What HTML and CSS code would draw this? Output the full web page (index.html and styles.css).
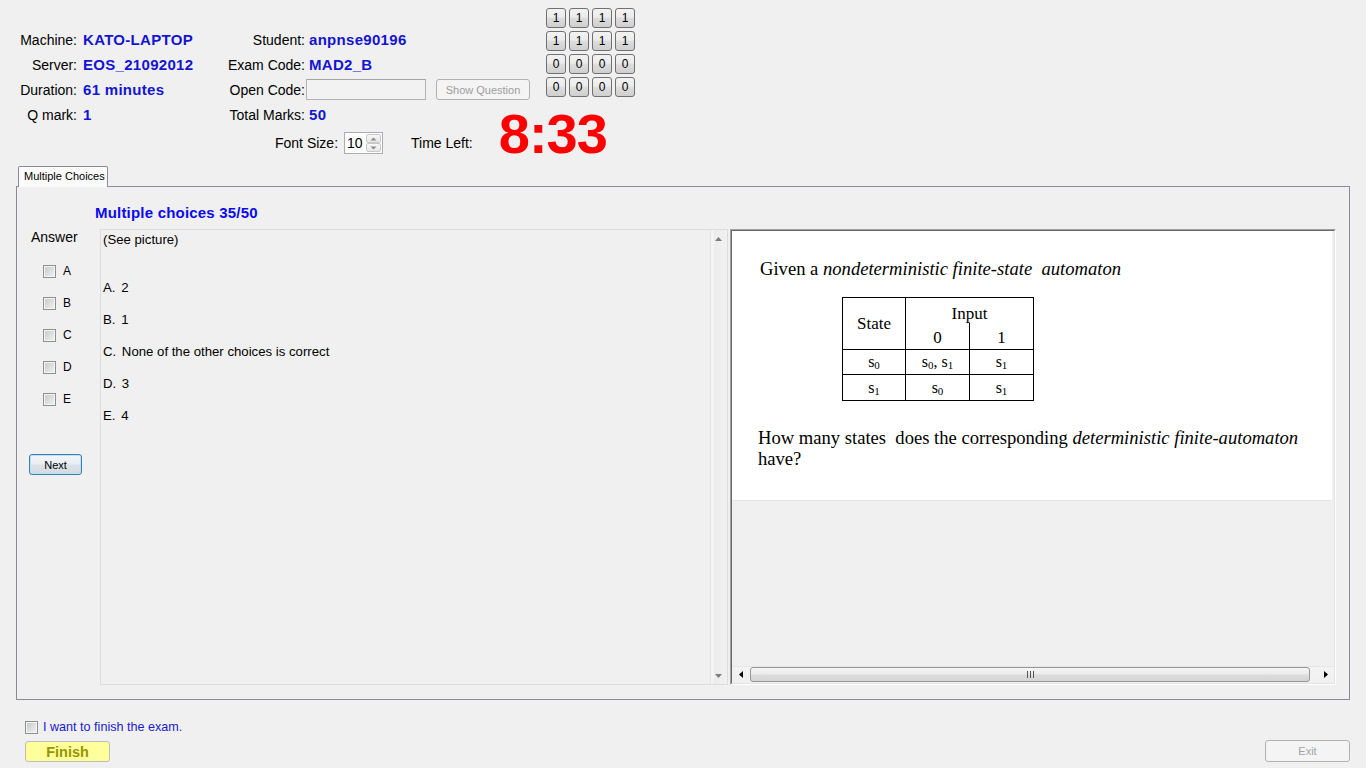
FILE: index.html
```html
<!DOCTYPE html>
<html>
<head>
<meta charset="utf-8">
<title>EOS Exam</title>
<link rel="stylesheet" href="styles.css">
</head>
<body>
<div class="app">
  <header class="top">
    <div class="top-left">
      <div class="info">
        <span class="lbl">Machine:</span><span class="val">KATO-LAPTOP</span><span class="lbl">Student:</span><span class="val val2">anpnse90196</span>
        <span class="lbl">Server:</span><span class="val">EOS_21092012</span><span class="lbl">Exam Code:</span><span class="val val2">MAD2_B</span>
        <span class="lbl">Duration:</span><span class="val">61 minutes</span><span class="lbl">Open Code:</span><span class="open-row"><span class="textbox"></span><span class="btn-disabled show-q">Show Question</span></span>
        <span class="lbl">Q mark:</span><span class="val">1</span><span class="lbl">Total Marks:</span><span class="val val2">50</span>
      </div>
      <div class="font-row">
        <span class="lbl2">Font Size:</span>
        <span class="spinner">
          <span class="spin-val">10</span>
          <span class="spin-btns">
            <span class="spin-btn"><svg width="7" height="4" viewBox="0 0 7 4"><path d="M0.5 3.5 L3.5 0.5 L6.5 3.5 Z" fill="#8a8a8a"/></svg></span>
            <span class="spin-btn"><svg width="7" height="4" viewBox="0 0 7 4"><path d="M0.5 0.5 L3.5 3.5 L6.5 0.5 Z" fill="#8a8a8a"/></svg></span>
          </span>
        </span>
        <span class="lbl2 time-lbl">Time Left:</span>
        <span class="timer">8:33</span>
      </div>
    </div>
    <div class="bits">
      <span class="bit">1</span><span class="bit">1</span><span class="bit">1</span><span class="bit">1</span>
      <span class="bit">1</span><span class="bit">1</span><span class="bit">1</span><span class="bit">1</span>
      <span class="bit">0</span><span class="bit">0</span><span class="bit">0</span><span class="bit">0</span>
      <span class="bit">0</span><span class="bit">0</span><span class="bit">0</span><span class="bit">0</span>
    </div>
  </header>

  <section class="tabs">
    <div class="tab-strip">
      <div class="tab">Multiple Choices</div>
    </div>
    <div class="panel">
      <div class="q-title">Multiple choices 35/50</div>
      <div class="qbody">
        <div class="answers">
          <div class="ans-title">Answer</div>
          <div class="ans-list">
            <div class="ans-row"><span class="cb"></span><span>A</span></div>
            <div class="ans-row"><span class="cb"></span><span>B</span></div>
            <div class="ans-row"><span class="cb"></span><span>C</span></div>
            <div class="ans-row"><span class="cb"></span><span>D</span></div>
            <div class="ans-row"><span class="cb"></span><span>E</span></div>
          </div>
          <div class="next">Next</div>
        </div>

        <div class="qtext">
          <div class="qtext-content">
            <div class="line first">(See picture)</div>
            <div class="line"><span class="key">A.</span> 2</div>
            <div class="line"><span class="key">B.</span> 1</div>
            <div class="line"><span class="key">C.</span> None of the other choices is correct</div>
            <div class="line"><span class="key">D.</span> 3</div>
            <div class="line"><span class="key">E.</span> 4</div>
          </div>
          <div class="vscroll">
            <span class="varrow"><svg width="7" height="4" viewBox="0 0 7 4"><path d="M0 4 L3.5 0 L7 4 Z" fill="#7d7d7d"/></svg></span>
            <span class="varrow"><svg width="7" height="4" viewBox="0 0 7 4"><path d="M0 0 L3.5 4 L7 0 Z" fill="#7d7d7d"/></svg></span>
          </div>
        </div>

        <div class="pic">
          <div class="pic-inner">
            <div class="pic-view">
              <div class="pic-img">
                <p class="p1">Given a <i>nondeterministic finite-state&nbsp; automaton</i></p>
                <table class="nfa">
                  <colgroup><col class="c1"><col class="c2"><col class="c3"></colgroup>
                  <tr class="r1"><td rowspan="2" class="hd">State</td><td colspan="2" class="hd input">Input</td></tr>
                  <tr class="r2"><td class="hd sub0">0</td><td class="hd sub1">1</td></tr>
                  <tr class="r3"><td>s<sub>0</sub></td><td>s<sub>0</sub>, s<sub>1</sub></td><td>s<sub>1</sub></td></tr>
                  <tr class="r4"><td>s<sub>1</sub></td><td>s<sub>0</sub></td><td>s<sub>1</sub></td></tr>
                </table>
                <p class="p2">How many states&nbsp; does the corresponding <i>deterministic finite-automaton</i><br>have?</p>
              </div>
            </div>
            <div class="hscroll">
              <span class="harrow"><svg width="4" height="7" viewBox="0 0 4 7"><path d="M4 0 L0 3.5 L4 7 Z" fill="#000"/></svg></span>
              <span class="hthumb"><svg width="7" height="7" viewBox="0 0 7 7"><path d="M0.5 0 V7 M3.5 0 V7 M6.5 0 V7" stroke="#555" stroke-width="1"/></svg></span>
              <span class="harrow"><svg width="4" height="7" viewBox="0 0 4 7"><path d="M0 0 L4 3.5 L0 7 Z" fill="#000"/></svg></span>
            </div>
          </div>
        </div>
      </div>
    </div>
  </section>

  <footer class="footer">
    <div class="finish-col">
      <div class="finish-check"><span class="cb"></span><span class="finish-lbl">I want to finish the exam.</span></div>
      <div class="finish-btn">Finish</div>
    </div>
    <div class="exit-btn">Exit</div>
  </footer>
</div>
</body>
</html>
```

FILE: styles.css
```css
* { box-sizing: border-box; }
html, body { margin: 0; padding: 0; }
body {
  background: #f0f0f0;
  font-family: "Liberation Sans", Arial, sans-serif;
  color: #000;
  width: 1366px;
  height: 768px;
  overflow: hidden;
}

/* ---------- top ---------- */
.top { display: flex; height: 166px; }
.top-left { width: 546px; flex-shrink: 0; }
.info {
  display: grid;
  grid-template-columns: 77px 127px 101px auto;
  grid-auto-rows: 25px;
  margin-top: 27px;
  align-items: center;
  white-space: nowrap;
}
.lbl { font-size: 14px; text-align: right; }
.val {
  font-size: 15px;
  font-weight: bold;
  color: #1414d4;
  padding-left: 6px;
  letter-spacing: 0.3px;
}
.val2 { padding-left: 4px; }
.open-row { display: flex; align-items: center; padding-left: 1px; }
.textbox {
  width: 120px;
  height: 21px;
  border: 1px solid #b4b4b4;
  border-top-color: #a4a4a4;
  background: #f2f2f2;
}
.btn-disabled {
  border: 1px solid #adb2b5;
  border-radius: 3px;
  background: #f4f4f4;
  color: #9d9d9d;
  font-size: 11px;
  display: flex;
  align-items: center;
  justify-content: center;
}
.show-q { width: 94px; height: 21px; margin-left: 10px; }

.font-row {
  display: flex;
  align-items: center;
  height: 22px;
  margin-top: 5px;
  margin-left: 275px;
  white-space: nowrap;
}
.font-row > * { flex-shrink: 0; }
.lbl2 { font-size: 14px; }
.spinner {
  width: 39px;
  height: 22px;
  margin-left: 6px;
  border: 1px solid #abadb3;
  background: #fff;
  display: flex;
  align-items: center;
}
.spin-val { font-size: 14px; padding-left: 2px; flex: 1; }
.spin-btns {
  width: 15px;
  height: 18px;
  margin-right: 1px;
  display: flex;
  flex-direction: column;
}
.spin-btn {
  flex: 1;
  border: 1px solid #c8c8c8;
  border-radius: 2px;
  background: linear-gradient(#f7f7f7, #e6e6e6);
  display: flex;
  align-items: center;
  justify-content: center;
}
.time-lbl { margin-left: 28px; }
.timer {
  margin-left: 26px;
  margin-bottom: 18px;
  font-size: 56px;
  line-height: 56px;
  font-weight: bold;
  color: #ff0000;
  letter-spacing: -1px;
}

.bits {
  display: grid;
  grid-template-columns: repeat(4, 20px);
  grid-auto-rows: 20px;
  gap: 3px;
  margin-top: 8px;
  align-self: flex-start;
}
.bit {
  border: 1px solid #707070;
  border-radius: 3px;
  background: linear-gradient(#f2f2f2 0%, #ebebeb 45%, #dddddd 52%, #cfcfcf 100%);
  font-size: 12px;
  display: flex;
  align-items: center;
  justify-content: center;
}

/* ---------- tabs ---------- */
.tab-strip { display: flex; padding-left: 18px; height: 20px; }
.tab {
  position: relative;
  z-index: 1;
  width: 90px;
  height: 21px;
  padding-left: 5px;
  border: 1px solid #898c95;
  border-bottom: none;
  border-radius: 2px 2px 0 0;
  background: #fbfbfb;
  font-size: 11px;
  line-height: 19px;
  white-space: nowrap;
}
.panel {
  margin: 0 16px;
  height: 514px;
  border: 1px solid #898c95;
  background: #f0f0f0;
  padding-top: 18px;
}
.q-title {
  margin-left: 78px;
  height: 16px;
  line-height: 16px;
  margin-bottom: 8px;
  font-size: 15px;
  font-weight: bold;
  color: #0a0af0;
  letter-spacing: 0.2px;
}
.qbody { display: flex; height: 456px; }

.answers { width: 83px; flex-shrink: 0; padding-left: 12px; }
.ans-title { font-size: 14px; line-height: 16px; padding-left: 2px; }
.ans-list { margin-top: 10px; padding-left: 14px; }
.ans-row {
  height: 32px;
  display: flex;
  align-items: center;
  gap: 7px;
  font-size: 12px;
}
.cb {
  width: 13px;
  height: 13px;
  flex-shrink: 0;
  border: 1px solid #8e8f8f;
  background: linear-gradient(135deg, #c4c6c8, #f4f4f4);
  box-shadow: inset 0 0 0 1px #f6f6f6;
}
.next {
  width: 53px;
  height: 21px;
  margin-top: 39px;
  border: 1px solid #3c7fb1;
  border-radius: 3px;
  background: linear-gradient(#f4f6f8 0%, #e9eef2 48%, #dce3e8 52%, #d2dbe1 100%);
  box-shadow: inset 0 0 0 1px #b9e1f7;
  font-size: 11px;
  display: flex;
  align-items: center;
  justify-content: center;
}

.qtext {
  width: 628px;
  flex-shrink: 0;
  border: 1px solid #dcdcdc;
  display: flex;
  background: #f0f0f0;
}
.qtext-content {
  flex: 1;
  padding: 2px 0 0 2px;
  font-size: 13.2px;
  line-height: 16px;
}
.line { margin-bottom: 16px; white-space: nowrap; }
.line.first { margin-bottom: 32px; }
.key { margin-right: 2px; }
.vscroll {
  width: 17px;
  display: flex;
  flex-direction: column;
  justify-content: space-between;
  background: linear-gradient(to right, #e4e4e4 0, #e4e4e4 1px, #f4f4f4 1px, #f4f4f4 4px, #ececec 4px, #f1f1f1 100%);
}
.varrow {
  height: 17px;
  display: flex;
  align-items: center;
  justify-content: center;
}

.pic {
  width: 606px;
  margin-left: 2px;
  flex-shrink: 0;
  border: 1px solid;
  border-color: #a0a0a0 #ffffff #ffffff #a0a0a0;
}
.pic-inner {
  height: 100%;
  border: 1px solid;
  border-color: #696969 #e3e3e3 #e3e3e3 #696969;
  display: flex;
  flex-direction: column;
}
.pic-view { flex: 1; overflow: hidden; }
.pic-img {
  width: 600px;
  height: 270px;
  background: #fff;
  border-bottom: 1px solid #e4e4e4;
  font-family: "Liberation Serif", "Times New Roman", serif;
  overflow: hidden;
  padding-top: 27px;
}
.p1 {
  margin: 0 0 0 28px;
  font-size: 18.6px;
  line-height: 21px;
  white-space: nowrap;
}
.nfa {
  border-collapse: collapse;
  margin: 18px 0 0 110px;
  font-size: 17px;
}
.nfa .c1 { width: 63px; }
.nfa .c2 { width: 64px; }
.nfa .c3 { width: 64px; }
.nfa td {
  border: 1px solid #000;
  text-align: center;
  padding: 0;
  line-height: 18px;
}
.nfa .r1 { height: 25px; }
.nfa .r2 { height: 27px; }
.nfa .r3 { height: 25px; }
.nfa .r4 { height: 26px; }
.nfa .hd { font-size: 17px; }
.nfa .input { border-bottom: none; vertical-align: bottom; }
.nfa .sub0, .nfa .sub1 { border-top: none; vertical-align: top; padding-top: 6px; }
.nfa .r3 td, .nfa .r4 td { font-size: 16px; }
.nfa sub { font-size: 11px; vertical-align: -2px; line-height: 0; }
.p2 {
  margin: 26px 0 0 26px;
  font-size: 18.6px;
  line-height: 21px;
  white-space: nowrap;
}

.hscroll {
  height: 17px;
  display: flex;
  flex-shrink: 0;
  background: linear-gradient(#e6e6e6 0, #e6e6e6 1px, #f3f3f3 1px, #f0f0f0 100%);
}
.harrow {
  width: 17px;
  display: flex;
  align-items: center;
  justify-content: center;
}
.hthumb {
  flex: 1;
  margin: 1px 7px 1px 1px;
  border: 1px solid #979797;
  border-radius: 3px;
  background: linear-gradient(#f6f6f6 0%, #ebebeb 45%, #dcdcdc 55%, #d4d4d4 100%);
  display: flex;
  align-items: center;
  justify-content: center;
}

/* ---------- footer ---------- */
.footer {
  height: 68px;
  display: flex;
  justify-content: space-between;
  align-items: flex-end;
  padding: 0 16px 6px 25px;
}
.finish-col { display: flex; flex-direction: column; gap: 6px; }
.finish-check { height: 16px; display: flex; align-items: center; gap: 5px; }
.finish-lbl { font-size: 12.6px; color: #1a1ad0; }
.finish-btn {
  width: 85px;
  height: 21px;
  border: 1px solid #bdbdbd;
  border-radius: 3px;
  background: #ffff9c;
  color: #959500;
  font-size: 14.5px;
  font-weight: bold;
  display: flex;
  align-items: center;
  justify-content: center;
}
.exit-btn {
  width: 85px;
  height: 22px;
  border: 1px solid #adb2b5;
  border-radius: 3px;
  background: #f4f4f4;
  color: #a3a3a3;
  font-size: 11px;
  display: flex;
  align-items: center;
  justify-content: center;
}
```
